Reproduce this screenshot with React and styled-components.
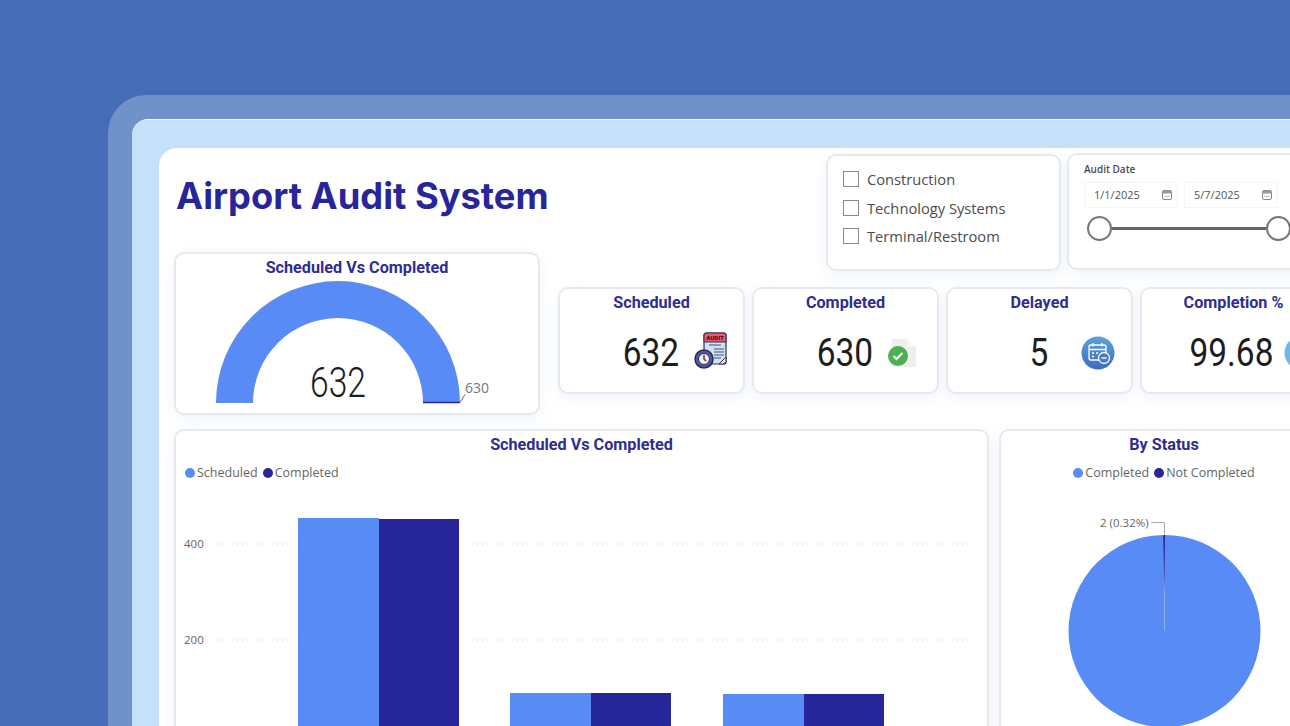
import React from 'react';
import styled, { createGlobalStyle } from 'styled-components';

const GlobalStyle = createGlobalStyle`
  html, body {
    margin: 0;
    width: 1290px;
    height: 726px;
    overflow: hidden;
    background: #456cb6;
  }
`;

const Page = styled.div`
  width: 1290px;
  height: 726px;
  overflow: hidden;
  padding: 95px 0 0 108px;
  box-sizing: border-box;
`;

const Frame = styled.div`
  width: 1260px;
  height: 700px;
  padding: 24px;
  box-sizing: border-box;
  background: #7191cb;
  border-radius: 38px 0 0 0;
`;

const Screen = styled.div`
  height: 800px;
  padding: 28px 0 0 27px;
  box-sizing: border-box;
  background: #c5e1fa;
  border-top: 1px solid #eef6fd;
  border-radius: 16px 0 0 0;
`;

const Panel = styled.div`
  height: 800px;
  padding: 0 0 0 15px;
  box-sizing: border-box;
  background: #fff;
  border-radius: 18px 0 0 0;
`;

const Top = styled.div`
  display: flex;
  height: 281px;
`;

const LeftColumn = styled.div`
  width: 366px;
  margin-right: 18px;
  flex: none;
`;

const Title = styled.h1`
  height: 104px;
  margin: 0;
  padding: 28px 0 0 2px;
  box-sizing: border-box;
  font: 700 36.3px/40px Inter, sans-serif;
  color: #27259a;
  white-space: nowrap;
`;

const Card = styled.div`
  box-sizing: border-box;
  background: #fff;
  border: 2px solid #e7eaed;
  border-radius: 10px;
  box-shadow: 0 4px 14px rgba(120, 160, 220, 0.12);
`;

const GaugeCard = styled(Card)`
  height: 163px;
  text-align: center;
  overflow: hidden;
`;

const CardTitle = styled.div`
  font: 700 16.2px/20px "Roboto", sans-serif;
  color: #2f2c94;
  text-align: center;
  padding-top: 4px;
`;

const RightColumn = styled.div`
  width: 780px;
  flex: none;
`;

const FilterRow = styled.div`
  display: flex;
  gap: 6px;
  height: 139px;
  padding: 5px 0 0 268px;
  box-sizing: border-box;
`;

const SlicerCard = styled(Card)`
  width: 235px;
  height: 117px;
  margin-top: 1px;
  padding: 9px 0 0 15px;
`;

const SlicerRow = styled.div`
  display: flex;
  align-items: center;
  gap: 8px;
  height: 28.5px;
  font: 400 14.7px/20px "Open Sans", sans-serif;
  color: #4c4c4c;
`;

const Checkbox = styled.span`
  width: 16px;
  height: 16px;
  box-sizing: border-box;
  border: 1.5px solid #8a8a8a;
  flex: none;
`;

const DateCard = styled(Card)`
  width: 260px;
  height: 117px;
  padding: 7px 0 0 15px;
  border-right: none;
  border-radius: 10px 0 0 10px;
`;

const DateLabel = styled.div`
  font: 600 10px/14px "Open Sans", sans-serif;
  color: #4a4a4a;
`;

const DateInputs = styled.div`
  display: flex;
  gap: 6px;
  margin-top: 6px;
`;

const DateInput = styled.div`
  width: 94px;
  height: 26px;
  padding: 0 5px 0 9px;
  box-sizing: border-box;
  display: flex;
  align-items: center;
  justify-content: space-between;
  border: 1px solid #f5f5f5;
  font: 400 11px/16px "Open Sans", sans-serif;
  color: #555;
`;

const Slider = styled.div`
  display: flex;
  align-items: center;
  width: 204px;
  margin-top: 8px;
  margin-left: 3px;
`;

const Handle = styled.span`
  width: 25px;
  height: 25px;
  box-sizing: border-box;
  border: 2px solid #777;
  border-radius: 50%;
  background: #fff;
  flex: none;
`;

const Track = styled.span`
  flex: 1;
  height: 3px;
  background: #666;
`;

const KpiRow = styled.div`
  display: flex;
  gap: 7px;
`;

const KpiCard = styled(Card)`
  width: 187px;
  height: 107px;
  flex: none;
`;

const KpiBody = styled.div`
  display: flex;
  align-items: center;
  justify-content: flex-end;
  gap: ${(p) => p.$gap}px;
  height: 50px;
  margin-top: 15px;
  padding-right: ${(p) => p.$right}px;
  color: #1d1d1d;
`;

const KpiValue = styled.span`
  display: inline-block;
  font: 400 38px/44px "Roboto", sans-serif;
  transform: scaleX(0.88);
  transform-origin: right center;
`;

const IconWrap = styled.span`
  display: flex;
  flex: none;
`;

const Bottom = styled.div`
  display: flex;
  gap: 10px;
`;

const ChartCard = styled(Card)`
  width: ${(p) => p.$width}px;
  height: 320px;
  flex: none;
  overflow: hidden;
`;

const Legend = styled.div`
  display: flex;
  gap: 5px;
  justify-content: ${(p) => (p.$center ? 'center' : 'flex-start')};
  height: 18px;
  margin-top: 9px;
  padding-left: ${(p) => (p.$center ? 0 : 9)}px;
  font: 400 12.5px/18px "Open Sans", sans-serif;
  color: #666;
`;

const LegendItem = styled.span`
  display: flex;
  align-items: center;
  gap: 2px;
`;

const Dot = styled.span`
  width: 10px;
  height: 10px;
  border-radius: 50%;
  background: ${(p) => p.$color};
`;

const ChartSvg = styled.svg`
  display: block;
  margin-top: 2px;
  overflow: visible;
`;

const AuditIcon = () => (
  <svg width="34" height="43" viewBox="0 0 34 43">
    <rect x="10" y="1" width="22" height="31" rx="2" fill="#cfe3f3" stroke="#2f2f5a" strokeWidth="1.2" />
    <path d="M10 3a2 2 0 0 1 2-2h18a2 2 0 0 1 2 2v7H10z" fill="#e8596a" stroke="#2f2f5a" strokeWidth="1" />
    <text x="21" y="8" textAnchor="middle" fontFamily="Roboto, sans-serif" fontWeight="900" fontSize="6" fill="#3a1420">AUDIT</text>
    <path d="M15 13h12M20 17h10M20 20h10M20 23h10M20 26h7" stroke="#44506e" strokeWidth="1.2" />
    <path d="M25 32l7-7v5l-3 2z" fill="#f2f2f2" stroke="#2f2f5a" strokeWidth="1" />
    <circle cx="10" cy="27" r="9" fill="#5a5699" stroke="#2a2a58" strokeWidth="1.5" />
    <circle cx="10" cy="27" r="5.5" fill="#eef0f8" stroke="#2a2a58" strokeWidth="1" />
    <path d="M10 23v4l2 2" stroke="#8a3040" strokeWidth="1.6" fill="none" />
  </svg>
);

const CompletedIcon = () => (
  <svg width="30" height="30" viewBox="0 0 30 30">
    <path d="M5 1h15l9 8v20H5z" fill="#eeeeee" />
    <path d="M20 1l9 8h-9z" fill="#f8f8f8" />
    <circle cx="11" cy="18" r="10" fill="#4caf50" />
    <path d="M6.5 18l3 3 6-6" fill="none" stroke="#fff" strokeWidth="2.2" />
  </svg>
);

const DelayedIcon = () => (
  <svg width="34" height="34" viewBox="0 0 34 34">
    <defs>
      <linearGradient id="delayedFill" x1="0" y1="0" x2="0" y2="1">
        <stop offset="0" stopColor="#5aa2d8" />
        <stop offset="1" stopColor="#3f6cc0" />
      </linearGradient>
    </defs>
    <circle cx="17" cy="17" r="16.5" fill="url(#delayedFill)" />
    <rect x="8" y="9" width="17" height="15" rx="2" fill="none" stroke="#fff" strokeWidth="1.3" />
    <path d="M8 13.5h17M12 7v3.5M21 7v3.5M11 17h2M15 17h2M11 20.5h2" stroke="#fff" strokeWidth="1.3" />
    <circle cx="23" cy="22" r="5.5" fill="#4a79c6" stroke="#fff" strokeWidth="1.3" />
    <path d="M20.5 22h5" stroke="#fff" strokeWidth="1.4" />
  </svg>
);

const PercentIcon = () => (
  <svg width="34" height="34" viewBox="0 0 34 34">
    <circle cx="17" cy="17" r="16.5" fill="#6db9ea" />
  </svg>
);

const SmallCalendar = () => (
  <svg width="10" height="10" viewBox="0 0 10 10">
    <rect x="0.5" y="0.5" width="9" height="9" rx="1.5" fill="#fff" stroke="#888" />
    <path d="M0.5 2a1.5 1.5 0 0 1 1.5-1.5h6a1.5 1.5 0 0 1 1.5 1.5v1.5h-9z" fill="#999" />
    <path d="M2.5 6.5h1M4.5 6.5h1M6.5 6.5h1" stroke="#888" />
  </svg>
);

const Gauge = () => (
  <svg width="362" height="136" viewBox="0 0 362 136">
    <path d="M40 125a122 122 0 0 1 244 0h-37a85 85 0 0 0-170 0z" fill="#598bf7" />
    <path d="M247 124.5h37" stroke="#27259a" strokeWidth="1.4" />
    <path d="M284 124.5l5-8" stroke="#666" strokeWidth="1" />
    <text x="134" y="119" textLength="56" lengthAdjust="spacingAndGlyphs" fontFamily="Roboto, sans-serif" fontWeight="300" fontSize="43" fill="#1d1d1d">632</text>
    <text x="289" y="115" fontFamily="'Open Sans', sans-serif" fontSize="14" fill="#777">630</text>
  </svg>
);

const bars = [
  { x: 122, light: 34, dark: 35 },
  { x: 334, light: 209, dark: 209 },
  { x: 547, light: 210, dark: 210 },
];

const BarChart = () => (
  <ChartSvg width="812" height="260" viewBox="0 0 812 260">
    {[60, 156].map((y) => (
      <line key={y} x1="36" x2="799" y1={y} y2={y} stroke="#d6d6d6" strokeWidth="1" strokeDasharray="1 4" />
    ))}
    <text x="8" y="64" fontFamily="'Open Sans', sans-serif" fontSize="11.5" fill="#666">400</text>
    <text x="8" y="160" fontFamily="'Open Sans', sans-serif" fontSize="11.5" fill="#666">200</text>
    {bars.map((b) => (
      <g key={b.x}>
        <rect x={b.x} y={b.light} width="81" height={260 - b.light} fill="#598bf7" />
        <rect x={b.x + 81} y={b.dark} width="80" height={260 - b.dark} fill="#27259a" />
      </g>
    ))}
  </ChartSvg>
);

const PieChart = () => (
  <ChartSvg width="300" height="260" viewBox="0 0 300 260">
    <circle cx="163.5" cy="147" r="96" fill="#598bf7" />
    <path d="M163.5 147v-96" stroke="#b9c9e6" strokeWidth="0.6" />
    <path d="M164 51h-1.8l1.3 60z" fill="#27259a" />
    <path d="M150 38.5h13.5v12" fill="none" stroke="#aaa" strokeWidth="1" />
    <text x="99" y="43" fontFamily="'Open Sans', sans-serif" fontSize="11.5" fill="#666">2 (0.32%)</text>
  </ChartSvg>
);

const kpis = [
  { title: 'Scheduled', value: '632', icon: <AuditIcon />, gap: 15, right: 15 },
  { title: 'Completed', value: '630', icon: <CompletedIcon />, gap: 14, right: 20 },
  { title: 'Delayed', value: '5', icon: <DelayedIcon />, gap: 33, right: 16 },
  { title: 'Completion %', value: '99.68', icon: <PercentIcon />, gap: 11, right: 7 },
];

function App() {
  return (
    <Page>
      <GlobalStyle />
      <Frame>
        <Screen>
          <Panel>
            <Top>
              <LeftColumn>
                <Title>Airport Audit System</Title>
                <GaugeCard>
                  <CardTitle>Scheduled Vs Completed</CardTitle>
                  <Gauge />
                </GaugeCard>
              </LeftColumn>
              <RightColumn>
                <FilterRow>
                  <SlicerCard>
                    {['Construction', 'Technology Systems', 'Terminal/Restroom'].map((item) => (
                      <SlicerRow key={item}>
                        <Checkbox />
                        {item}
                      </SlicerRow>
                    ))}
                  </SlicerCard>
                  <DateCard>
                    <DateLabel>Audit Date</DateLabel>
                    <DateInputs>
                      <DateInput>1/1/2025<SmallCalendar /></DateInput>
                      <DateInput>5/7/2025<SmallCalendar /></DateInput>
                    </DateInputs>
                    <Slider>
                      <Handle />
                      <Track />
                      <Handle />
                    </Slider>
                  </DateCard>
                </FilterRow>
                <KpiRow>
                  {kpis.map((kpi) => (
                    <KpiCard key={kpi.title}>
                      <CardTitle>{kpi.title}</CardTitle>
                      <KpiBody $gap={kpi.gap} $right={kpi.right}>
                        <KpiValue>{kpi.value}</KpiValue>
                        <IconWrap>{kpi.icon}</IconWrap>
                      </KpiBody>
                    </KpiCard>
                  ))}
                </KpiRow>
              </RightColumn>
            </Top>
            <Bottom>
              <ChartCard $width={815}>
                <CardTitle>Scheduled Vs Completed</CardTitle>
                <Legend>
                  <LegendItem><Dot $color="#598bf7" />Scheduled</LegendItem>
                  <LegendItem><Dot $color="#27259a" />Completed</LegendItem>
                </Legend>
                <BarChart />
              </ChartCard>
              <ChartCard $width={330}>
                <CardTitle>By Status</CardTitle>
                <Legend $center>
                  <LegendItem><Dot $color="#598bf7" />Completed</LegendItem>
                  <LegendItem><Dot $color="#27259a" />Not Completed</LegendItem>
                </Legend>
                <PieChart />
              </ChartCard>
            </Bottom>
          </Panel>
        </Screen>
      </Frame>
    </Page>
  );
}

export default App;
